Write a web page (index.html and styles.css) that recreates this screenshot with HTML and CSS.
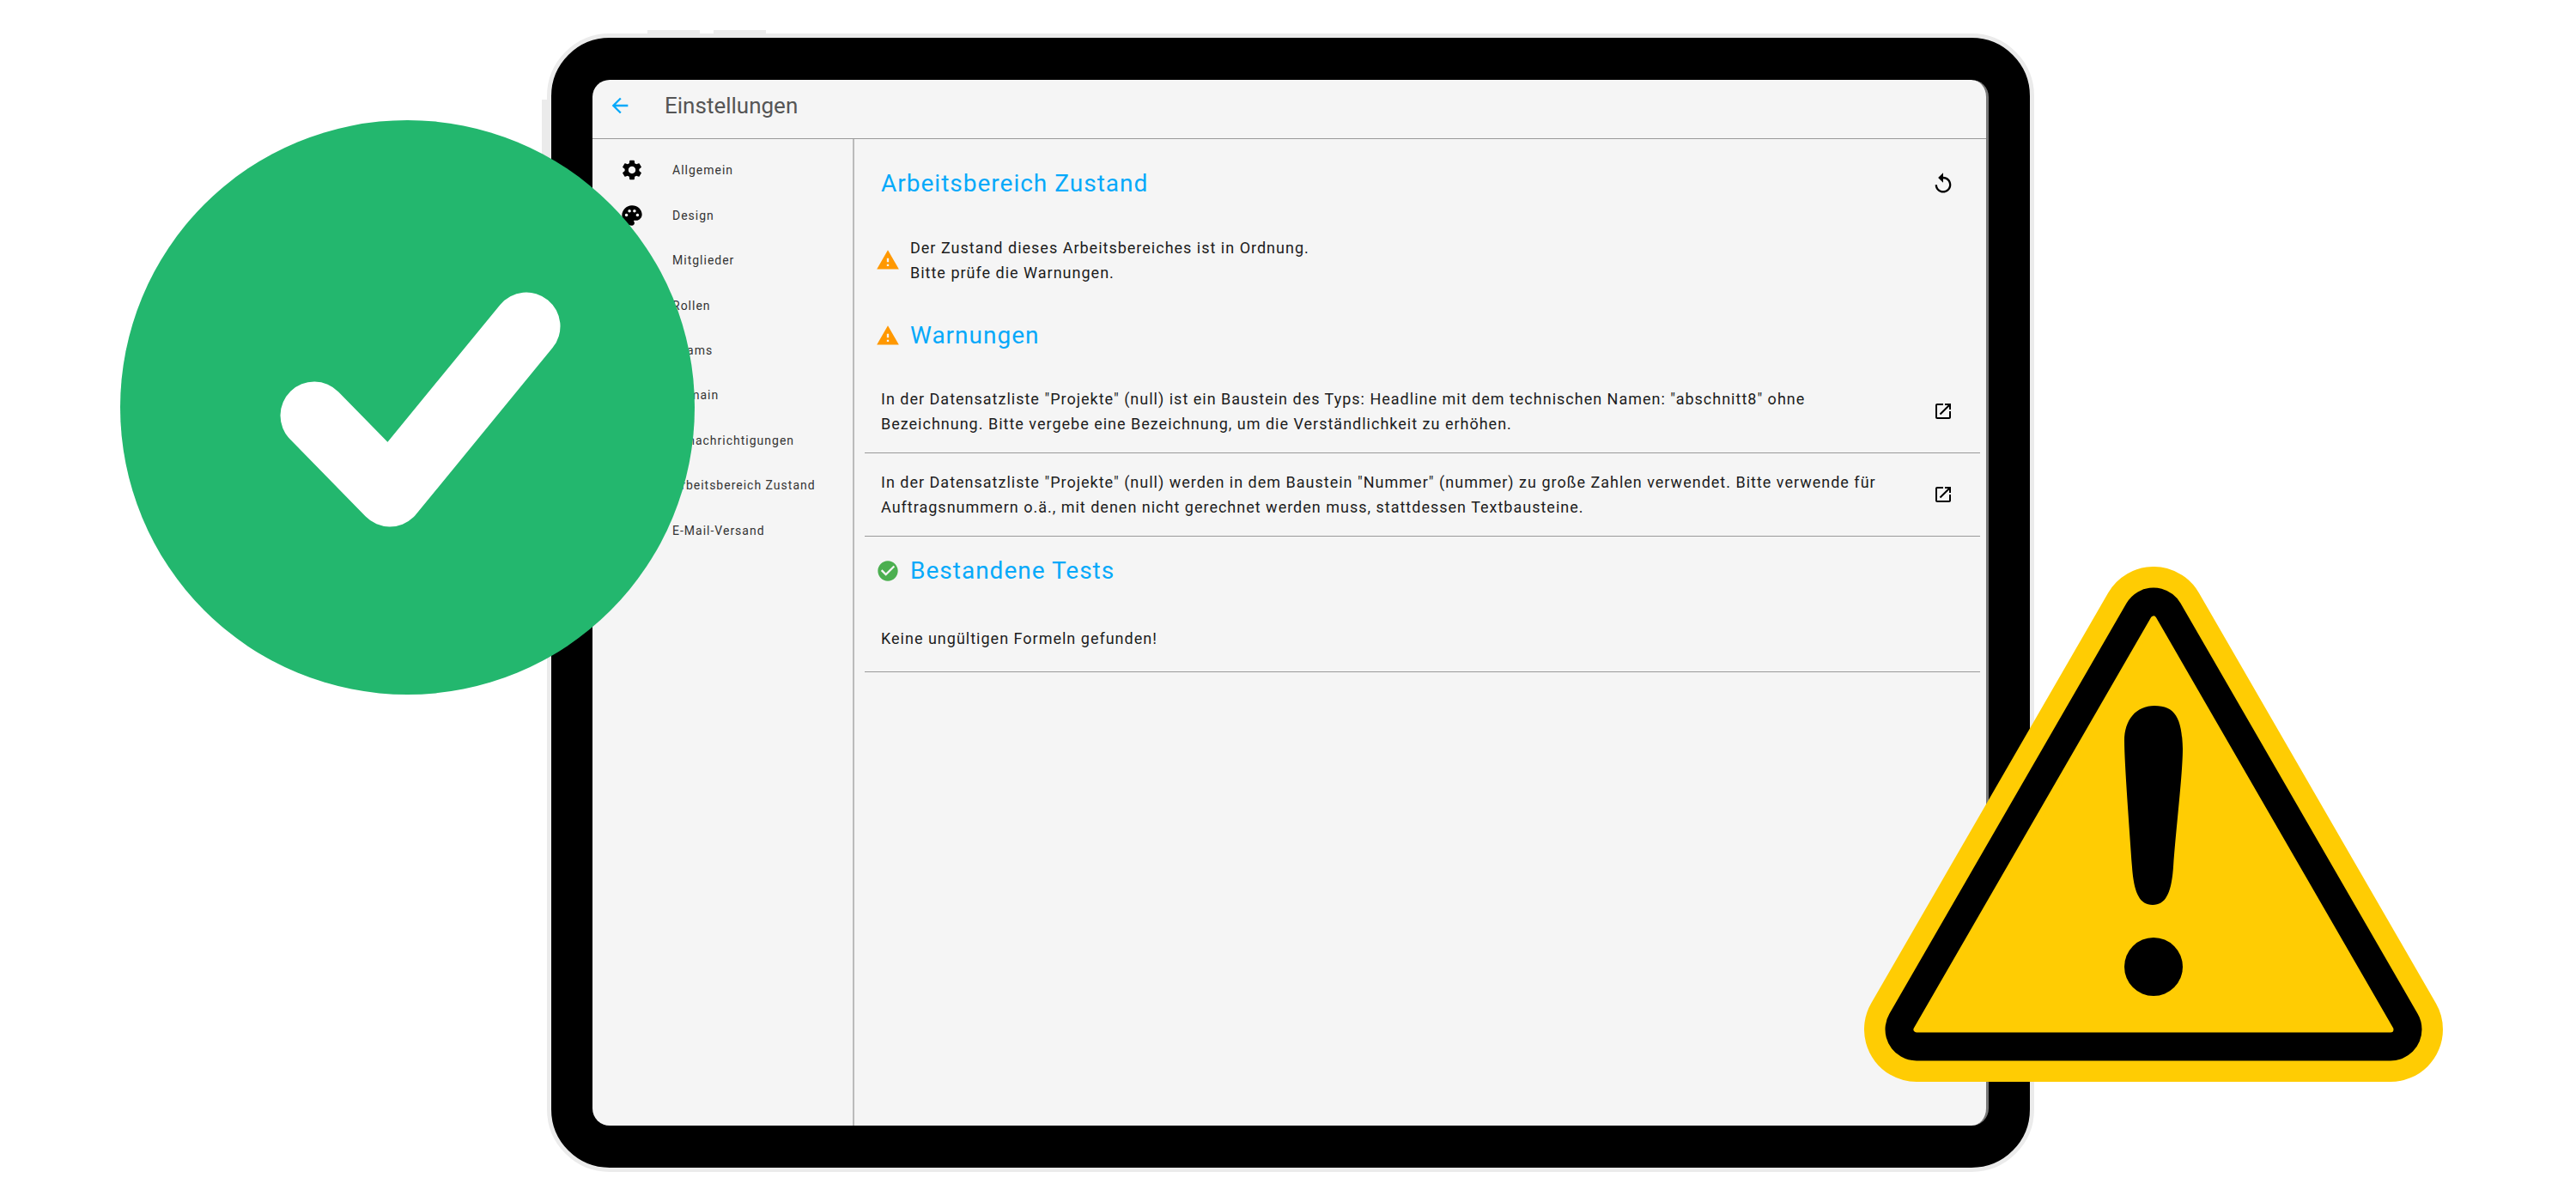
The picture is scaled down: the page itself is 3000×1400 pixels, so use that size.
FILE: index.html
```html
<!DOCTYPE html>
<html lang="de">
<head>
<meta charset="utf-8">
<meta name="viewport" content="width=device-width, initial-scale=1">
<title>Einstellungen – Arbeitsbereich Zustand</title>
<link rel="stylesheet" href="styles.css">
</head>
<body>
<svg class="sprite" aria-hidden="true">
  <symbol id="warn" viewBox="0 0 24 24"><path d="M1 21h22L12 2 1 21zm12-3h-2v-2h2v2zm0-4h-2v-4h2v4z"/></symbol>
  <symbol id="open" viewBox="0 0 24 24"><path d="M19 19H5V5h7V3H5c-1.11 0-2 .9-2 2v14c0 1.1.89 2 2 2h14c1.1 0 2-.9 2-2v-7h-2v7zM14 3v2h3.59l-9.83 9.83 1.41 1.41L19 6.41V10h2V3h-7z"/></symbol>
</svg>
<div class="stage">
  <div class="device">
    <span class="key key-top-a"></span>
    <span class="key key-top-b"></span>
    <span class="key key-side"></span>
    <div class="screen">
      <header class="topbar">
        <button class="icon-button back" type="button" aria-label="Zurück">
          <svg class="icon" viewBox="0 0 24 24"><path d="M20 11H7.83l5.59-5.59L12 4l-8 8 8 8 1.41-1.41L7.83 13H20v-2z"/></svg>
        </button>
        <h1 class="title">Einstellungen</h1>
      </header>
      <div class="body">
        <nav class="sidebar" aria-label="Einstellungen">
          <ul class="menu">
            <li><a class="menu-link" href="#allgemein">
              <svg class="icon" viewBox="0 0 24 24"><path d="M19.14 12.94c.04-.3.06-.61.06-.94 0-.32-.02-.64-.07-.94l2.03-1.58c.18-.14.23-.41.12-.61l-1.92-3.32c-.12-.22-.37-.29-.59-.22l-2.39.96c-.5-.38-1.03-.7-1.62-.94l-.36-2.54c-.04-.24-.24-.41-.48-.41h-3.84c-.24 0-.43.17-.47.41l-.36 2.54c-.59.24-1.13.57-1.62.94l-2.39-.96c-.22-.08-.47 0-.59.22L2.74 8.87c-.12.21-.08.47.12.61l2.03 1.58c-.05.3-.09.63-.09.94s.02.64.07.94l-2.03 1.58c-.18.14-.23.41-.12.61l1.92 3.32c.12.22.37.29.59.22l2.39-.96c.5.38 1.03.7 1.62.94l.36 2.54c.05.24.24.41.48.41h3.84c.24 0 .44-.17.47-.41l.36-2.54c.59-.24 1.13-.56 1.62-.94l2.39.96c.22.08.47 0 .59-.22l1.92-3.32c.12-.22.07-.47-.12-.61l-2.01-1.58zM12 15.6c-1.98 0-3.6-1.62-3.6-3.6s1.62-3.6 3.6-3.6 3.6 1.62 3.6 3.6-1.62 3.6-3.6 3.6z"/></svg>
              Allgemein</a></li>
            <li><a class="menu-link" href="#design">
              <svg class="icon" viewBox="0 0 24 24"><path d="M12 2C6.49 2 2 6.49 2 12s4.49 10 10 10c1.38 0 2.5-1.12 2.5-2.5 0-.61-.23-1.2-.64-1.67-.08-.1-.13-.21-.13-.33 0-.28.22-.5.5-.5H16c3.31 0 6-2.69 6-6 0-4.96-4.49-9-10-9zM6.5 13c-.83 0-1.5-.67-1.5-1.5S5.67 10 6.5 10 8 10.67 8 11.5 7.33 13 6.5 13zm3-4C8.67 9 8 8.33 8 7.5S8.67 6 9.5 6s1.5.67 1.5 1.5S10.33 9 9.5 9zm5 0c-.83 0-1.5-.67-1.5-1.5S13.67 6 14.5 6s1.5.67 1.5 1.5S15.33 9 14.5 9zm3 4c-.83 0-1.5-.67-1.5-1.5s.67-1.5 1.5-1.5 1.5.67 1.5 1.5-.67 1.5-1.5 1.5z"/></svg>
              Design</a></li>
            <li><a class="menu-link" href="#mitglieder"><span class="icon"></span>Mitglieder</a></li>
            <li><a class="menu-link" href="#rollen"><span class="icon"></span>Rollen</a></li>
            <li><a class="menu-link" href="#teams"><span class="icon"></span>Teams</a></li>
            <li><a class="menu-link" href="#domain"><span class="icon"></span>Domain</a></li>
            <li><a class="menu-link" href="#benachrichtigungen"><span class="icon"></span>Benachrichtigungen</a></li>
            <li><a class="menu-link" href="#zustand"><span class="icon"></span>Arbeitsbereich Zustand</a></li>
            <li><a class="menu-link" href="#versand"><span class="icon"></span>E-Mail-Versand</a></li>
          </ul>
        </nav>
        <main class="content">
          <div class="page-head">
            <h2 class="heading">Arbeitsbereich Zustand</h2>
            <button class="icon-button" type="button" aria-label="Erneut prüfen">
              <svg class="icon" viewBox="0 0 24 24"><path d="M12 5V1L7 6l5 5V7c3.31 0 6 2.69 6 6s-2.69 6-6 6-6-2.69-6-6H4c0 4.42 3.58 8 8 8s8-3.58 8-8-3.58-8-8-8z"/></svg>
            </button>
          </div>
          <div class="status">
            <svg class="icon warning"><use href="#warn"/></svg>
            <p class="text">Der Zustand dieses Arbeitsbereiches ist in Ordnung.<br>Bitte prüfe die Warnungen.</p>
          </div>
          <section>
            <div class="section-head">
              <svg class="icon warning"><use href="#warn"/></svg>
              <h2 class="heading">Warnungen</h2>
            </div>
            <div class="row">
              <p class="text">In der Datensatzliste "Projekte" (null) ist ein Baustein des Typs: Headline mit dem technischen Namen: "abschnitt8" ohne Bezeichnung. Bitte vergebe eine Bezeichnung, um die Verständlichkeit zu erhöhen.</p>
              <button class="icon-button" type="button" aria-label="Öffnen"><svg class="icon small"><use href="#open"/></svg></button>
            </div>
            <div class="row">
              <p class="text">In der Datensatzliste "Projekte" (null) werden in dem Baustein "Nummer" (nummer) zu große Zahlen verwendet. Bitte verwende für Auftragsnummern o.ä., mit denen nicht gerechnet werden muss, stattdessen Textbausteine.</p>
              <button class="icon-button" type="button" aria-label="Öffnen"><svg class="icon small"><use href="#open"/></svg></button>
            </div>
          </section>
          <section>
            <div class="section-head">
              <svg class="icon passed" viewBox="0 0 24 24"><path d="M12 2C6.48 2 2 6.48 2 12s4.48 10 10 10 10-4.48 10-10S17.52 2 12 2zm-2 15l-5-5 1.41-1.41L10 14.17l7.59-7.59L19 8l-9 9z"/></svg>
              <h2 class="heading">Bestandene Tests</h2>
            </div>
            <div class="row">
              <p class="text">Keine ungültigen Formeln gefunden!</p>
            </div>
          </section>
        </main>
      </div>
    </div>
  </div>
  <svg class="badge-ok" viewBox="0 0 669 669" role="img" aria-label="In Ordnung">
    <circle cx="334.500" cy="334.500" r="334.500" fill="#23b76e"/>
    <path d="M226 344l88 90 159-194" fill="none" stroke="#fff" stroke-width="79" stroke-linecap="round" stroke-linejoin="round"/>
  </svg>
  <svg class="badge-warning" viewBox="0 0 674 600" role="img" aria-label="Warnung">
    <g stroke-linejoin="round">
      <path d="M337 61L61 539h552z" fill="#ffcc03" stroke="#ffcc03" stroke-width="122"/>
      <path d="M337 61L61 539h552z" fill="#000" stroke="#000" stroke-width="73"/>
      <path d="M337 61L61 539h552z" fill="#ffcc03" stroke="#ffcc03" stroke-width="7"/>
    </g>
    <path d="M338 162C317 162 303 178 303 203C303 228 309 306 312 350C314 378 320 394 336 394C352 394 358 378 360 350C363 306 371 242 371 212C370 176 362 162 338 162z"/>
    <circle cx="337" cy="466" r="34"/>
  </svg>
</div>
</body>
</html>
```
FILE: styles.css
```css
* {
  box-sizing: border-box;
}

body {
  margin: 0;
  background: #fff;
  color: #1c1c1c;
  font-family: Roboto, sans-serif;
  font-size: 18px;
  line-height: 29px;
}

h1,
h2,
p,
ul {
  margin: 0;
  padding: 0;
}

.sprite {
  display: none;
}

.stage {
  position: relative;
  display: flex;
  min-height: 100vh;
  padding: 39px 631px 35px 637px;
}

/* Tablet */

.device {
  position: relative;
  display: flex;
  flex: 1;
  padding: 49px 48px;
  border: 5px solid #ebebeb;
  border-radius: 73px;
  background: #000;
}

.key {
  position: absolute;
  background: #ebebeb;
}

.key-top-a,
.key-top-b {
  top: -9px;
  width: 61px;
  height: 4px;
}

.key-top-a {
  left: 112px;
}

.key-top-b {
  left: 189px;
}

.key-side {
  top: 72px;
  left: -11px;
  width: 6px;
  height: 80px;
}

.screen {
  display: flex;
  flex: 1;
  flex-direction: column;
  overflow: hidden;
  border-right: 3px solid #777;
  border-radius: 20px;
  background: #f5f5f5;
}

.topbar {
  display: flex;
  align-items: center;
  gap: 38px;
  height: 69px;
  padding: 0 18px 8px;
  border-bottom: 1px solid #999;
}

.title {
  color: #555;
  font-size: 26px;
  font-weight: 400;
  line-height: 36px;
}

.icon {
  display: block;
  flex: none;
  width: 28px;
  height: 28px;
  fill: #000;
}

.small {
  width: 24px;
  height: 24px;
}

.warning {
  fill: #ff9800;
}

.passed {
  fill: #4caf50;
}

.icon-button {
  display: flex;
  flex: none;
  align-items: center;
  justify-content: center;
  width: 28px;
  height: 28px;
  padding: 0;
  border: 0;
  background: none;
  cursor: pointer;
}

.back .icon {
  fill: #05a9fa;
}

.body {
  display: flex;
  flex: 1;
  letter-spacing: 1px;
}

/* Sidebar */

.sidebar {
  flex: none;
  width: 305px;
  padding-top: 10px;
  border-right: 2px solid #bbb;
}

.menu {
  display: grid;
  grid-auto-rows: 1fr;
  min-height: 472px;
  list-style: none;
}

.menu-link {
  display: flex;
  align-items: center;
  gap: 33px;
  height: 100%;
  padding-left: 32px;
  color: #333;
  font-size: 14px;
  line-height: 20px;
  text-decoration: none;
}

/* Content */

.content {
  flex: 1;
  padding: 11px 7px 0 12px;
}

.page-head,
.status,
.section-head,
.row {
  display: flex;
  align-items: center;
}

.page-head,
.row {
  justify-content: space-between;
  gap: 40px;
  padding: 0 29px 0 19px;
}

.page-head {
  height: 82px;
}

.heading {
  color: #05a9fa;
  font-size: 28px;
  font-weight: 400;
  line-height: 36px;
}

.status,
.section-head {
  gap: 12px;
  padding-left: 13px;
}

.status {
  min-height: 96px;
}

.section-head {
  height: 80px;
}

.row {
  min-height: 78px;
  padding-top: 19px;
  padding-bottom: 19px;
  border-bottom: 1px solid #999;
}

/* Overlaid signs */

.badge-ok {
  position: absolute;
  top: 140px;
  left: 140px;
  width: 669px;
  height: 669px;
}

.badge-warning {
  position: absolute;
  right: 155px;
  bottom: 140px;
  width: 674px;
  height: 600px;
}
```
